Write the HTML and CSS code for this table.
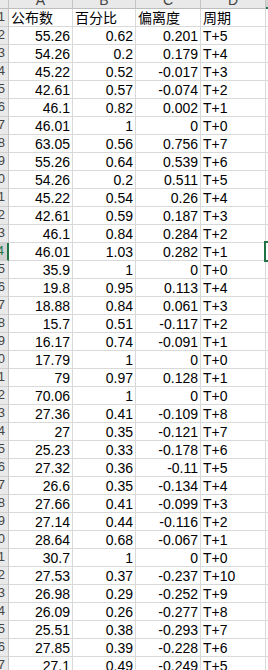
FILE: index.html
```html
<!DOCTYPE html>
<html lang="zh">
<head>
<meta charset="utf-8">
<title>Sheet</title>
<link rel="stylesheet" href="styles.css">
</head>
<body>
<div class="sheet">
  <div class="row hdr">
    <div class="cell rh corner"></div>
    <div class="cell a">A</div>
    <div class="cell b">B</div>
    <div class="cell c">C</div>
    <div class="cell d">D</div>
    <div class="cell e esel"></div>
  </div>
  <div class="row"><div class="cell rh"><span>1</span></div><div class="cell a txt">公布数</div><div class="cell b txt">百分比</div><div class="cell c txt">偏离度</div><div class="cell d txt">周期</div><div class="cell e"></div></div>
  <div class="row"><div class="cell rh"><span>2</span></div><div class="cell a num">55.26</div><div class="cell b num">0.62</div><div class="cell c num">0.201</div><div class="cell d txt">T+5</div><div class="cell e"></div></div>
  <div class="row"><div class="cell rh"><span>3</span></div><div class="cell a num">54.26</div><div class="cell b num">0.2</div><div class="cell c num">0.179</div><div class="cell d txt">T+4</div><div class="cell e"></div></div>
  <div class="row"><div class="cell rh"><span>4</span></div><div class="cell a num">45.22</div><div class="cell b num">0.52</div><div class="cell c num">-0.017</div><div class="cell d txt">T+3</div><div class="cell e"></div></div>
  <div class="row"><div class="cell rh"><span>5</span></div><div class="cell a num">42.61</div><div class="cell b num">0.57</div><div class="cell c num">-0.074</div><div class="cell d txt">T+2</div><div class="cell e"></div></div>
  <div class="row"><div class="cell rh"><span>6</span></div><div class="cell a num">46.1</div><div class="cell b num">0.82</div><div class="cell c num">0.002</div><div class="cell d txt">T+1</div><div class="cell e"></div></div>
  <div class="row"><div class="cell rh"><span>7</span></div><div class="cell a num">46.01</div><div class="cell b num">1</div><div class="cell c num">0</div><div class="cell d txt">T+0</div><div class="cell e"></div></div>
  <div class="row"><div class="cell rh"><span>8</span></div><div class="cell a num">63.05</div><div class="cell b num">0.56</div><div class="cell c num">0.756</div><div class="cell d txt">T+7</div><div class="cell e"></div></div>
  <div class="row"><div class="cell rh"><span>9</span></div><div class="cell a num">55.26</div><div class="cell b num">0.64</div><div class="cell c num">0.539</div><div class="cell d txt">T+6</div><div class="cell e"></div></div>
  <div class="row"><div class="cell rh"><span>10</span></div><div class="cell a num">54.26</div><div class="cell b num">0.2</div><div class="cell c num">0.511</div><div class="cell d txt">T+5</div><div class="cell e"></div></div>
  <div class="row"><div class="cell rh"><span>11</span></div><div class="cell a num">45.22</div><div class="cell b num">0.54</div><div class="cell c num">0.26</div><div class="cell d txt">T+4</div><div class="cell e"></div></div>
  <div class="row"><div class="cell rh"><span>12</span></div><div class="cell a num">42.61</div><div class="cell b num">0.59</div><div class="cell c num">0.187</div><div class="cell d txt">T+3</div><div class="cell e"></div></div>
  <div class="row"><div class="cell rh"><span>13</span></div><div class="cell a num">46.1</div><div class="cell b num">0.84</div><div class="cell c num">0.284</div><div class="cell d txt">T+2</div><div class="cell e"></div></div>
  <div class="row sel"><div class="cell rh"><span>14</span></div><div class="cell a num">46.01</div><div class="cell b num">1.03</div><div class="cell c num">0.282</div><div class="cell d txt">T+1</div><div class="cell e"><div class="selbox"></div></div></div>
  <div class="row"><div class="cell rh"><span>15</span></div><div class="cell a num">35.9</div><div class="cell b num">1</div><div class="cell c num">0</div><div class="cell d txt">T+0</div><div class="cell e"></div></div>
  <div class="row"><div class="cell rh"><span>16</span></div><div class="cell a num">19.8</div><div class="cell b num">0.95</div><div class="cell c num">0.113</div><div class="cell d txt">T+4</div><div class="cell e"></div></div>
  <div class="row"><div class="cell rh"><span>17</span></div><div class="cell a num">18.88</div><div class="cell b num">0.84</div><div class="cell c num">0.061</div><div class="cell d txt">T+3</div><div class="cell e"></div></div>
  <div class="row"><div class="cell rh"><span>18</span></div><div class="cell a num">15.7</div><div class="cell b num">0.51</div><div class="cell c num">-0.117</div><div class="cell d txt">T+2</div><div class="cell e"></div></div>
  <div class="row"><div class="cell rh"><span>19</span></div><div class="cell a num">16.17</div><div class="cell b num">0.74</div><div class="cell c num">-0.091</div><div class="cell d txt">T+1</div><div class="cell e"></div></div>
  <div class="row"><div class="cell rh"><span>20</span></div><div class="cell a num">17.79</div><div class="cell b num">1</div><div class="cell c num">0</div><div class="cell d txt">T+0</div><div class="cell e"></div></div>
  <div class="row"><div class="cell rh"><span>21</span></div><div class="cell a num">79</div><div class="cell b num">0.97</div><div class="cell c num">0.128</div><div class="cell d txt">T+1</div><div class="cell e"></div></div>
  <div class="row"><div class="cell rh"><span>22</span></div><div class="cell a num">70.06</div><div class="cell b num">1</div><div class="cell c num">0</div><div class="cell d txt">T+0</div><div class="cell e"></div></div>
  <div class="row"><div class="cell rh"><span>23</span></div><div class="cell a num">27.36</div><div class="cell b num">0.41</div><div class="cell c num">-0.109</div><div class="cell d txt">T+8</div><div class="cell e"></div></div>
  <div class="row"><div class="cell rh"><span>24</span></div><div class="cell a num">27</div><div class="cell b num">0.35</div><div class="cell c num">-0.121</div><div class="cell d txt">T+7</div><div class="cell e"></div></div>
  <div class="row"><div class="cell rh"><span>25</span></div><div class="cell a num">25.23</div><div class="cell b num">0.33</div><div class="cell c num">-0.178</div><div class="cell d txt">T+6</div><div class="cell e"></div></div>
  <div class="row"><div class="cell rh"><span>26</span></div><div class="cell a num">27.32</div><div class="cell b num">0.36</div><div class="cell c num">-0.11</div><div class="cell d txt">T+5</div><div class="cell e"></div></div>
  <div class="row"><div class="cell rh"><span>27</span></div><div class="cell a num">26.6</div><div class="cell b num">0.35</div><div class="cell c num">-0.134</div><div class="cell d txt">T+4</div><div class="cell e"></div></div>
  <div class="row"><div class="cell rh"><span>28</span></div><div class="cell a num">27.66</div><div class="cell b num">0.41</div><div class="cell c num">-0.099</div><div class="cell d txt">T+3</div><div class="cell e"></div></div>
  <div class="row"><div class="cell rh"><span>29</span></div><div class="cell a num">27.14</div><div class="cell b num">0.44</div><div class="cell c num">-0.116</div><div class="cell d txt">T+2</div><div class="cell e"></div></div>
  <div class="row"><div class="cell rh"><span>30</span></div><div class="cell a num">28.64</div><div class="cell b num">0.68</div><div class="cell c num">-0.067</div><div class="cell d txt">T+1</div><div class="cell e"></div></div>
  <div class="row"><div class="cell rh"><span>31</span></div><div class="cell a num">30.7</div><div class="cell b num">1</div><div class="cell c num">0</div><div class="cell d txt">T+0</div><div class="cell e"></div></div>
  <div class="row"><div class="cell rh"><span>32</span></div><div class="cell a num">27.53</div><div class="cell b num">0.37</div><div class="cell c num">-0.237</div><div class="cell d txt">T+10</div><div class="cell e"></div></div>
  <div class="row"><div class="cell rh"><span>33</span></div><div class="cell a num">26.98</div><div class="cell b num">0.29</div><div class="cell c num">-0.252</div><div class="cell d txt">T+9</div><div class="cell e"></div></div>
  <div class="row"><div class="cell rh"><span>34</span></div><div class="cell a num">26.09</div><div class="cell b num">0.26</div><div class="cell c num">-0.277</div><div class="cell d txt">T+8</div><div class="cell e"></div></div>
  <div class="row"><div class="cell rh"><span>35</span></div><div class="cell a num">25.51</div><div class="cell b num">0.38</div><div class="cell c num">-0.293</div><div class="cell d txt">T+7</div><div class="cell e"></div></div>
  <div class="row"><div class="cell rh"><span>36</span></div><div class="cell a num">27.85</div><div class="cell b num">0.39</div><div class="cell c num">-0.228</div><div class="cell d txt">T+6</div><div class="cell e"></div></div>
  <div class="row"><div class="cell rh"><span>37</span></div><div class="cell a num">27.1</div><div class="cell b num">0.49</div><div class="cell c num">-0.249</div><div class="cell d txt">T+5</div><div class="cell e"></div></div>
</div>
</body>
</html>
```
FILE: styles.css
```css
html, body {
  margin: 0;
  padding: 0;
  background: #ffffff;
  overflow: hidden;
}
body {
  font-family: "Liberation Sans", Arial, "Noto Sans CJK SC", sans-serif;
  font-size: 14px;
  color: #000000;
}
.sheet {
  width: 268px;
}
.row {
  display: flex;
  height: 18px;
}
.row.hdr {
  height: 9px;
}
.cell {
  box-sizing: border-box;
  flex: none;
  display: flex;
  align-items: flex-end;
  line-height: 14px;
  padding-bottom: 1px;
  border-right: 1px solid #d9d9d9;
  border-bottom: 1px solid #d9d9d9;
  overflow: hidden;
  white-space: nowrap;
}
.rh {
  width: 9px;
  background: #e9e9e9;
  border-right-color: #c4c4c4;
  border-bottom-color: #cfcfcf;
  justify-content: flex-end;
  align-items: center;
  padding: 0 3px 2px 0;
  font-size: 13px;
  color: #444444;
}
.rh span {
  flex: none;
}
.a { width: 64px; }
.b { width: 63px; }
.c { width: 65px; }
.d { width: 65px; }
.e {
  flex: 1;
  border-right: none;
  position: relative;
  overflow: visible;
}
.num {
  justify-content: flex-end;
  padding-right: 2px;
}
.txt {
  padding-left: 2px;
}
.hdr .cell {
  background: #e9e9e9;
  border-right-color: #c4c4c4;
  border-bottom-color: #bdbdbd;
  justify-content: center;
  color: #444444;
  padding-bottom: 1px;
}
.hdr .esel {
  background: #d2d2d2;
  border-bottom: 2px solid #217346;
}
.sel .rh {
  background: #d2d2d2;
  border-right: 2px solid #217346;
  color: #217346;
}
.sel .d {
  border-right-color: transparent;
}
.selbox {
  position: absolute;
  top: -2px;
  bottom: -2px;
  left: -2px;
  right: -6px;
  border: 2px solid #217346;
}
```
